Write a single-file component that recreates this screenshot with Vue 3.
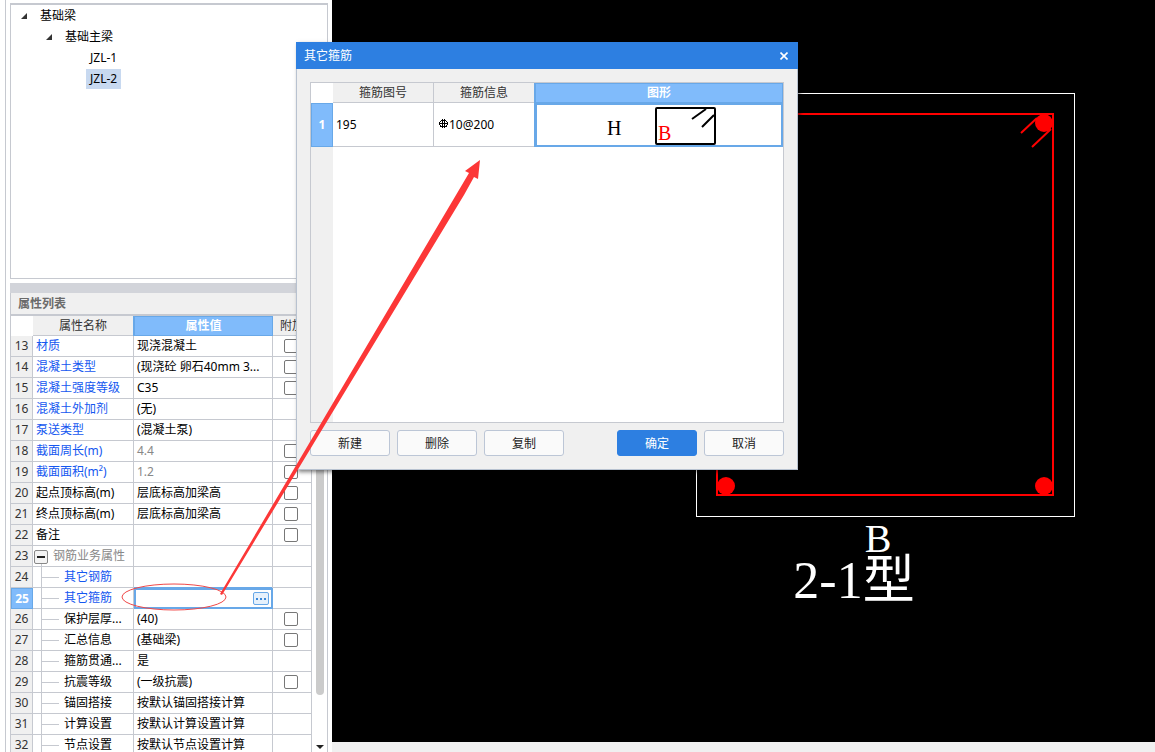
<script setup>
import { ref } from 'vue'

const rows = ref([
  { no: 13, name: '材质', value: '现浇混凝土', tone: 'blue', check: true },
  { no: 14, name: '混凝土类型', value: '(现浇砼 卵石40mm 3...', tone: 'blue', check: true },
  { no: 15, name: '混凝土强度等级', value: 'C35', tone: 'blue', check: true },
  { no: 16, name: '混凝土外加剂', value: '(无)', tone: 'blue' },
  { no: 17, name: '泵送类型', value: '(混凝土泵)', tone: 'blue' },
  { no: 18, name: '截面周长(m)', value: '4.4', tone: 'blue', check: true, readonly: true },
  { no: 19, name: '截面面积(m²)', value: '1.2', tone: 'blue', check: true, readonly: true },
  { no: 20, name: '起点顶标高(m)', value: '层底标高加梁高', check: true },
  { no: 21, name: '终点顶标高(m)', value: '层底标高加梁高', check: true },
  { no: 22, name: '备注', value: '', check: true },
  { no: 23, name: '钢筋业务属性', value: '', tone: 'muted', group: true },
  { no: 24, name: '其它钢筋', value: '', tone: 'blue', child: true },
  { no: 25, name: '其它箍筋', value: '', tone: 'blue', child: true, active: true },
  { no: 26, name: '保护层厚...', value: '(40)', child: true, check: true },
  { no: 27, name: '汇总信息', value: '(基础梁)', child: true, check: true },
  { no: 28, name: '箍筋贯通...', value: '是', child: true },
  { no: 29, name: '抗震等级', value: '(一级抗震)', child: true, check: true },
  { no: 30, name: '锚固搭接', value: '按默认锚固搭接计算', child: true },
  { no: 31, name: '计算设置', value: '按默认计算设置计算', child: true },
  { no: 32, name: '节点设置', value: '按默认节点设置计算', child: true },
])

const tree = [
  { label: '基础梁', level: 0, open: true },
  { label: '基础主梁', level: 1, open: true },
  { label: 'JZL-1', level: 2 },
  { label: 'JZL-2', level: 2, selected: true },
]
</script>

<template>
  <div class="app">
    <aside class="sidebar">
      <ul class="tree">
        <li v-for="n in tree" :key="n.label" :class="['node', 'level-' + n.level]">
          <svg v-if="n.open" class="twisty" width="8" height="8" viewBox="0 0 8 8">
            <path d="M7 1V7H1Z" fill="#333" />
          </svg>
          <span :class="['node-label', { selected: n.selected }]">{{ n.label }}</span>
        </li>
      </ul>
      <div class="splitter"></div>
      <section class="props">
        <h2>属性列表</h2>
        <div class="props-body">
          <table class="grid">
            <colgroup>
              <col class="c-no" /><col class="c-name" /><col class="c-value" /><col class="c-check" />
            </colgroup>
            <thead>
              <tr>
                <th class="corner"></th>
                <th>属性名称</th>
                <th class="current">属性值</th>
                <th>附加</th>
              </tr>
            </thead>
            <tbody>
              <tr v-for="r in rows" :key="r.no" :class="{ active: r.active }">
                <th scope="row">{{ r.no }}</th>
                <td :class="['name', r.tone, { child: r.child, group: r.group }]">
                  <button v-if="r.group" class="fold" aria-label="折叠"></button>
                  <span>{{ r.name }}</span>
                </td>
                <td :class="['value', { muted: r.readonly }]">
                  <button v-if="r.active" class="more" aria-label="编辑">
                    <svg width="12" height="4" viewBox="0 0 12 4">
                      <path d="M1 1h2v2H1zM5 1h2v2H5zM9 1h2v2H9z" fill="#3c88d8" />
                    </svg>
                  </button>
                  <span v-else>{{ r.value }}</span>
                </td>
                <td class="check">
                  <input v-if="r.check" type="checkbox" :aria-label="r.name" />
                </td>
              </tr>
            </tbody>
          </table>
          <div class="scrollbar">
            <div class="thumb"></div>
            <svg width="8" height="4" viewBox="0 0 8 4"><path d="M0 0H8L4 4Z" fill="#222" /></svg>
          </div>
        </div>
      </section>
    </aside>

    <main class="view">
      <svg class="canvas" width="100%" height="100%">
        <rect x="364.5" y="93.5" width="378" height="423" fill="none" stroke="#fff" />
        <rect x="385" y="114" width="336" height="381" fill="none" stroke="#f00" stroke-width="2" />
        <g fill="#f00">
          <circle cx="712" cy="123" r="9" />
          <circle cx="394" cy="486" r="9" />
          <circle cx="712" cy="486" r="9" />
        </g>
        <path d="M689 133L705 118M700 147L719 129" stroke="#f00" stroke-width="2" />
        <text class="dim" x="546" y="552">B</text>
        <text class="caption" x="522" y="598">2-1型</text>
      </svg>
    </main>

    <section class="dialog" role="dialog" aria-label="其它箍筋">
      <header>
        <span>其它箍筋</span>
        <button aria-label="关闭">
          <svg width="8" height="8" viewBox="0 0 8 8">
            <path d="M0.5 0.5L7.5 7.5M7.5 0.5L0.5 7.5" stroke="#fff" stroke-width="1.6" />
          </svg>
        </button>
      </header>
      <div class="sheet">
        <table class="grid">
          <colgroup><col class="c-no" /><col class="c-code" /><col class="c-code" /><col /></colgroup>
          <thead>
            <tr>
              <th class="corner"></th>
              <th>箍筋图号</th>
              <th>箍筋信息</th>
              <th class="current">图形</th>
            </tr>
          </thead>
          <tbody>
            <tr class="active">
              <th scope="row">1</th>
              <td>195</td>
              <td class="info">
                <svg width="9" height="10" viewBox="0 0 9 10">
                  <path d="M3.5 0V9M5.5 0V9M1 7.5H8M0 4.5H9M2 1.5H7M0.5 3V6M8.5 3V6M1 2.5H2M7 2.5H8M1 6.5H2M7 6.5H8" fill="none" stroke="#000" />
                </svg><span>10@200</span>
              </td>
              <td class="shape">
                <svg width="246" height="40" viewBox="0 0 246 40">
                  <text x="70" y="30">H</text>
                  <rect x="119" y="3" width="59" height="36" rx="1" fill="none" stroke="#000" stroke-width="2" />
                  <path d="M155 14L169 4M165 22L177 10" stroke="#000" stroke-width="2" />
                  <text class="red" x="121" y="35">B</text>
                </svg>
              </td>
            </tr>
          </tbody>
        </table>
        <div class="gutter"></div>
      </div>
      <footer>
        <button>新建</button>
        <button>删除</button>
        <button>复制</button>
        <button class="primary">确定</button>
        <button>取消</button>
      </footer>
    </section>

    <svg class="annotation" width="100%" height="100%">
      <ellipse cx="174" cy="597" rx="52" ry="13" fill="none" stroke="#f04848" />
      <path d="M220 594L456 195L469 173L465 171L480 160L478 179L474 177L464 195L222 595Z" fill="#fc3737" />
    </svg>
  </div>
</template>

<style>
body {
  overflow: hidden;
  background: #fff;
}
</style>

<style scoped>
.app {
  position: relative;
  display: flex;
  height: 100vh;
  overflow: hidden;
  font: 12px/20px "Noto Sans", "Noto Sans CJK SC", sans-serif;
  color: #000;
}
.app * {
  box-sizing: border-box;
}
button {
  font: inherit;
  padding: 0;
}
.sidebar {
  flex: none;
  display: flex;
  flex-direction: column;
  width: 327px;
  margin-left: 5px;
  padding: 3px 4px 0;
  border-left: 1px solid #c6c9d0;
  overflow: hidden;
}
.tree {
  flex: none;
  height: 276px;
  margin: 0;
  padding: 0;
  list-style: none;
  border: 1px solid #c6c9d0;
  border-top-width: 2px;
}
.node {
  display: flex;
  align-items: center;
  height: 21px;
}
.level-0 {
  padding-left: 9px;
}
.level-1 {
  padding-left: 34px;
}
.level-2 {
  padding-left: 75px;
}
.twisty {
  margin-right: 8px;
}
.node-label {
  padding: 0 4px;
}
.selected {
  background: #c8d9f0;
}
.splitter {
  flex: none;
  height: 10px;
  margin-top: 4px;
  background: #d2d4da;
}
.props {
  flex: 1;
  min-height: 0;
  border: 1px solid #c6c9d0;
  border-width: 0 1px;
}
.props h2 {
  margin: 0;
  height: 23px;
  padding-left: 7px;
  background: #f0f0f0;
  border-bottom: 2px solid #c6c9d0;
  font-size: 12px;
  font-weight: 700;
  line-height: 21px;
  color: #6a6a6a;
}
.props-body {
  display: flex;
  height: calc(100% - 23px);
}
.grid {
  table-layout: fixed;
  border-spacing: 0;
}
.props .grid {
  flex: none;
  width: 301px;
  align-self: flex-start;
}
.c-no {
  width: 22px;
}
.c-name {
  width: 101px;
}
.c-value {
  width: 139px;
}
.c-check {
  width: 39px;
}
.c-code {
  width: 101px;
}
.grid th,
.grid td {
  height: 21px;
  padding: 0;
  border: 0 solid #c6c9d0;
  border-width: 0 1px 1px 0;
  overflow: hidden;
  white-space: nowrap;
}
.grid th {
  background: #f0f0f0;
  font-weight: 400;
  color: #333;
}
.grid thead th {
  height: 20px;
  line-height: 18px;
}
.grid thead .corner {
  background: #fff;
  border-color: #fff;
}
.grid thead .current {
  background: #80bbfb;
  border: 1px solid #68a8e8;
  box-shadow: -1px 0 #68a8e8;
  color: #fff;
  font-weight: 700;
}
.grid .active th {
  background: #80bbfb;
  border: 1px solid #68a8e8;
  color: #fff;
  font-weight: 700;
  line-height: 18px;
}
.grid td.name {
  position: relative;
  padding-left: 3px;
}
.blue {
  color: #1457f0;
}
.muted {
  color: #888;
}
.grid td.child {
  padding-left: 31px;
  background:
    linear-gradient(#c6c9d0, #c6c9d0) 8px 0 / 1px 100% no-repeat,
    linear-gradient(#c6c9d0, #c6c9d0) 9px 10px / 17px 1px no-repeat;
}
.grid td.group {
  padding-left: 1px;
  background: linear-gradient(#c6c9d0, #c6c9d0) 8px 100% / 1px 6px no-repeat;
}
.fold {
  width: 14px;
  height: 14px;
  margin-right: 5px;
  vertical-align: middle;
  border: 1px solid #888;
  border-radius: 2px;
  background: linear-gradient(#222, #222) center / 8px 2px no-repeat #f4f4f4;
}
.grid td.value {
  padding-left: 3px;
}
.grid .active td.value {
  border: 2px solid #68a8e8;
  box-shadow: -1px -1px #68a8e8;
}
.more {
  display: flex;
  align-items: center;
  justify-content: center;
  width: 16px;
  height: 13px;
  margin: 0 2px 0 auto;
  border: 1px solid #68a8e8;
  border-radius: 2px;
  background: #e6f1fc;
}
.grid td.check {
  padding-right: 2px;
  text-align: center;
  line-height: 0;
}
.check input {
  appearance: none;
  width: 14px;
  height: 14px;
  margin: 0;
  vertical-align: middle;
  border: 1px solid #777;
  border-radius: 2px;
  background: #fff;
}
.scrollbar {
  flex: 1;
  display: flex;
  flex-direction: column;
  align-items: center;
  justify-content: space-between;
  padding-bottom: 3px;
}
.thumb {
  width: 8px;
  height: calc(100% - 54px);
  border-radius: 4px;
  background: #cbcbcb;
}
.view {
  flex: 1;
  min-width: 0;
  background: #000;
  border-bottom: 10px solid #f0f0f0;
}
.canvas {
  display: block;
}
.canvas text {
  fill: #fff;
  font-family: "Liberation Serif", "Noto Sans CJK SC", serif;
  text-anchor: middle;
}
.dim {
  font-size: 40px;
}
.caption {
  font-size: 52px;
}
.dialog {
  position: absolute;
  left: 296px;
  top: 42px;
  width: 502px;
  background: #f0f0f0;
  border: 1px solid #b8c2d0;
  border-top: 0;
  box-shadow: 2px 2px 4px rgba(0, 0, 0, 0.5);
}
.dialog header {
  display: flex;
  align-items: center;
  justify-content: space-between;
  height: 27px;
  margin: 0 -1px;
  padding: 0 10px 0 8px;
  background: #2d7fe1;
  color: #fff;
}
.dialog header button {
  display: flex;
  border: 0;
  background: none;
}
.sheet {
  display: flex;
  flex-direction: column;
  height: 341px;
  margin: 13px 13px 0;
  border: 1px solid #c6c9d0;
  background: #fff;
}
.sheet .grid {
  width: 100%;
}
.sheet .grid tbody th,
.sheet .grid td {
  height: 44px;
}
.sheet .grid td {
  padding-left: 3px;
}
.sheet .grid td.info {
  padding-left: 5px;
}
.info svg {
  margin-right: 1px;
}
.sheet .grid td.shape {
  padding: 0;
  border: 2px solid #68a8e8;
  box-shadow: -1px 0 #68a8e8;
}
.shape svg {
  display: block;
}
.shape text {
  font: 20px "Liberation Serif", serif;
}
.shape .red {
  fill: #f00;
}
.gutter {
  flex: 1;
  width: 22px;
  background: #f0f0f0;
}
.dialog footer {
  display: flex;
  gap: 7px;
  padding: 7px 13px 13px;
}
.dialog footer button {
  width: 80px;
  height: 26px;
  padding-top: 1px;
  border: 1px solid #bcc6d6;
  border-radius: 3px;
  background: #fafafa;
  color: #222;
}
.dialog footer .primary {
  margin-left: auto;
  border-color: #2d7fe1;
  background: #2d7fe1;
  color: #fff;
}
.annotation {
  position: absolute;
  inset: 0;
  pointer-events: none;
}
</style>
